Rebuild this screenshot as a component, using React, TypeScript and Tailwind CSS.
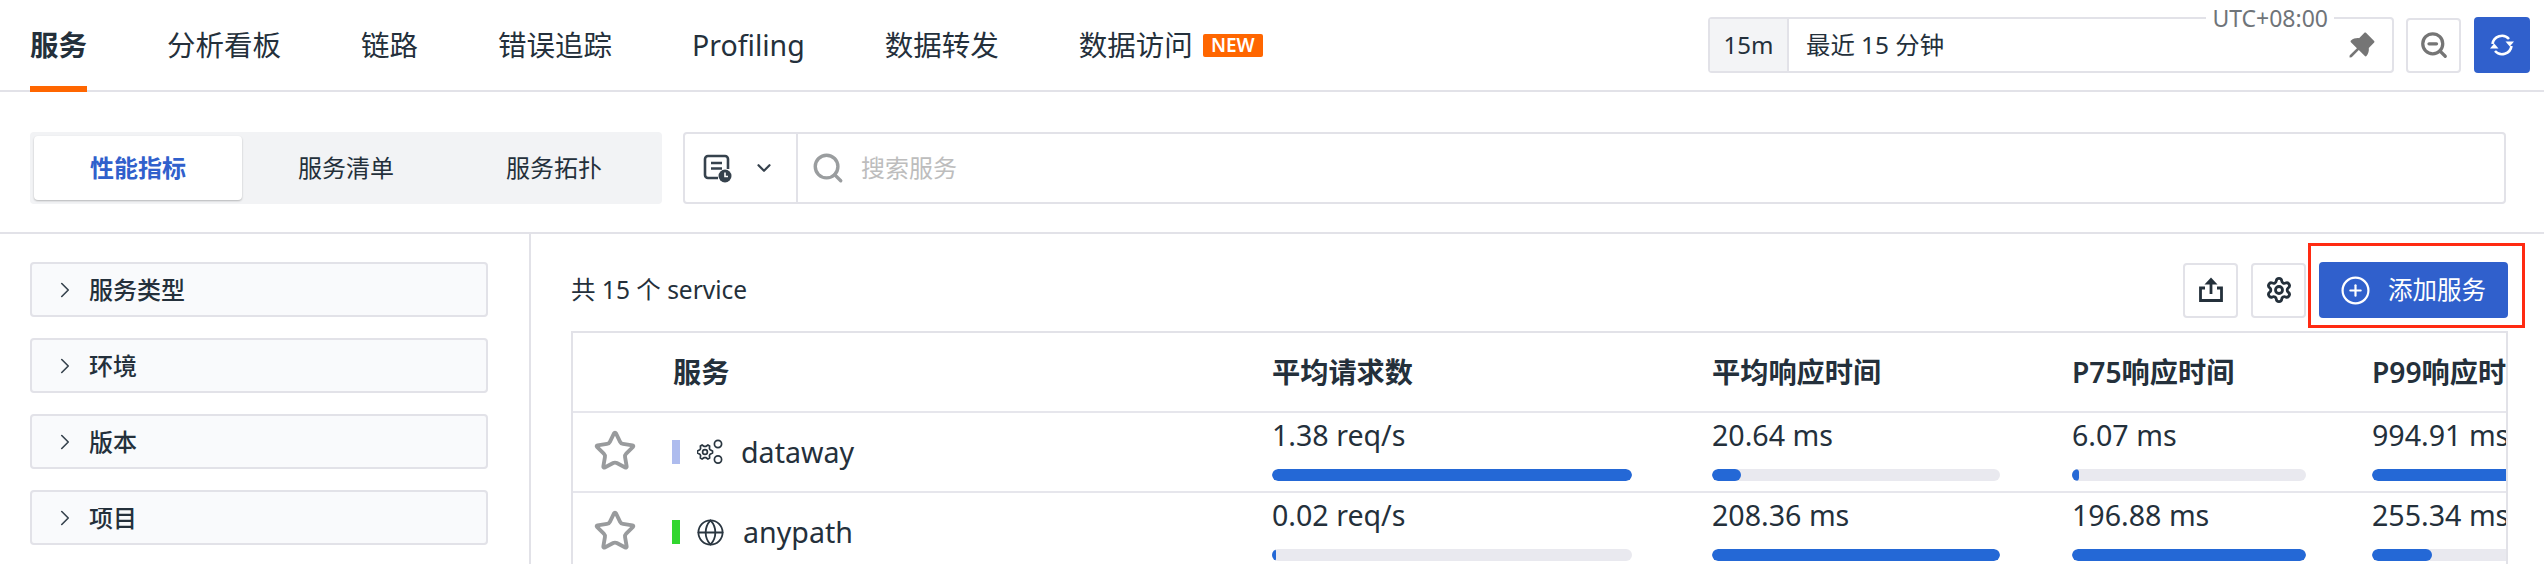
import React from 'react';
import { ChevronDown, ChevronRight, CirclePlus, Globe, Search, Settings, Star, ZoomOut } from 'lucide-react';
import { AiFillPushpin } from 'react-icons/ai';

const navItems = ['服务', '分析看板', '链路', '错误追踪', 'Profiling', '数据转发', '数据访问'];
const filters = ['服务类型', '环境', '版本', '项目'];

const rows = [
  {
    name: 'dataway',
    color: 'bg-[#aebcee]',
    textClass: 'ml-[18px]',
    metrics: [
      { value: '1.38 req/s', fill: 100 },
      { value: '20.64 ms', fill: 10 },
      { value: '6.07 ms', fill: 3 },
      { value: '994.91 ms', fill: 100 },
    ],
  },
  {
    name: 'anypath',
    color: 'bg-[#32d62f]',
    textClass: 'ml-[20px]',
    metrics: [
      { value: '0.02 req/s', fill: 1 },
      { value: '208.36 ms', fill: 100 },
      { value: '196.88 ms', fill: 100 },
      { value: '255.34 ms', fill: 23 },
    ],
  },
];

const gridCols = 'grid grid-cols-[100px_599px_440px_360px_300px_1fr]';

// six tooth gear outline for the service type icon
const gearPoints = Array.from({ length: 24 }, (_, i) => {
  const angle = ((i * 15 - 7.5) * Math.PI) / 180;
  const r = i % 4 < 2 ? 7.6 : 5.6;
  return `${(8 + r * Math.cos(angle)).toFixed(2)},${(13 + r * Math.sin(angle)).toFixed(2)}`;
}).join(' ');

function ServiceIcon() {
  return (
    <svg width="26" height="26" viewBox="0 0 26 26" fill="none" stroke="#2a3640" strokeWidth="1.7" strokeLinejoin="round">
      <polygon points={gearPoints} />
      <circle cx="8" cy="13" r="2.4" />
      <circle cx="21" cy="5" r="3.6" />
      <circle cx="21" cy="20.5" r="3.6" />
    </svg>
  );
}

function ListClockIcon() {
  return (
    <svg width="30" height="30" viewBox="0 0 30 30" fill="none">
      <path d="M16 25H6a3 3 0 0 1-3-3V6a3 3 0 0 1 3-3h17a3 3 0 0 1 3 3v10" stroke="#36424d" strokeWidth="2.6" />
      <path d="M9 10h11M9 15.5h11" stroke="#36424d" strokeWidth="2.6" />
      <circle cx="23" cy="23" r="6.5" fill="#36424d" />
      <path d="M23 19.5v4h3" stroke="#ffffff" strokeWidth="1.6" fill="none" />
    </svg>
  );
}

function UploadIcon() {
  return (
    <svg width="26" height="26" viewBox="0 0 26 26" fill="none">
      <path d="M7 11H2.5v12.5h21V11H19" stroke="#24303b" strokeWidth="2.8" />
      <path d="M13 17V5" stroke="#24303b" strokeWidth="2.8" />
      <path d="M13 0.5l6.5 7h-13z" fill="#24303b" />
    </svg>
  );
}

function RefreshIcon() {
  return (
    <svg width="26" height="26" viewBox="0 0 26 26" fill="none">
      <path d="M3.5 12a9.5 9.5 0 0 1 16.5-5" stroke="#ffffff" strokeWidth="2.6" />
      <path d="M22.5 14a9.5 9.5 0 0 1-16.5 5" stroke="#ffffff" strokeWidth="2.6" />
      <path d="M16.5 9.5h8.5l-4.2 5z" fill="#ffffff" />
      <path d="M9.5 16.5h-8.5l4.2-5z" fill="#ffffff" />
    </svg>
  );
}

function MetricCell({ value, fill, width }: { value: string; fill: number; width: string }) {
  return (
    <div className="flex flex-col pt-[3px] min-w-0">
      <span className="h-[38px] leading-[38px] whitespace-nowrap">{value}</span>
      <div className={`mt-[15px] h-[12px] rounded-full bg-[#e9e9ef] overflow-hidden ${width}`}>
        <div className="h-full rounded-full bg-[#2468d6]" style={{ width: `${fill}%` }} />
      </div>
    </div>
  );
}

const barWidths = ['w-[360px]', 'w-[288px]', 'w-[234px]', 'w-[260px]'];
const headers = ['平均请求数', '平均响应时间', 'P75响应时间', 'P99响应时间'];

export default function App() {
  return (
    <div className="w-[2544px] h-[564px] overflow-hidden bg-white text-[#24303b] text-[24px] font-['Noto_Sans','Noto_Sans_CJK_SC',sans-serif]">
      <header className="h-[92px] border-b-2 border-[#e2e2e8] flex items-center pl-[30px] pr-[14px]">
        <nav className="flex gap-[80px] text-[28.5px]">
          {navItems.map((item, i) => (
            <div key={item} className={`relative flex items-center whitespace-nowrap ${i === 0 ? 'font-semibold' : ''}`}>
              {item}
              {i === 0 && <div className="absolute left-0 right-0 top-[62px] h-[6px] bg-[#ff6600]" />}
              {item === '数据访问' && (
                <span className="ml-[10px] h-[23px] w-[60px] flex items-center justify-center rounded-[2px] bg-[#ff6600] text-white text-[19px] font-semibold">
                  NEW
                </span>
              )}
            </div>
          ))}
        </nav>
        <div className="ml-auto flex items-center">
          <div className="relative w-[686px] h-[56px] flex border-2 border-[#e2e2e8] rounded-[4px]">
            <div className="w-[79px] flex items-center justify-center bg-[#f3f4f6] border-r-2 border-[#e2e2e8]">15m</div>
            <div className="flex-1 flex items-center pl-[17px] text-[24.4px]">最近 15 分钟</div>
            <AiFillPushpin className="self-center mr-[13px] text-[#757575]" size={34} />
            <span className="absolute -top-[13px] right-[58px] px-[6px] bg-white text-[#6f7479] text-[23px] leading-[24px]">UTC+08:00</span>
          </div>
          <button className="ml-[12px] w-[55px] h-[55px] flex items-center justify-center border-2 border-[#e2e2e8] rounded-[4px]">
            <ZoomOut size={30} color="#757575" strokeWidth={2.6} />
          </button>
          <button className="ml-[13px] w-[56px] h-[56px] flex items-center justify-center bg-[#3060cc] rounded-[4px]">
            <RefreshIcon />
          </button>
        </div>
      </header>

      <section className="h-[142px] border-b-2 border-[#e2e2e8] pt-[40px] pl-[30px] pr-[38px] flex gap-[21px]">
        <div className="w-[632px] h-[72px] bg-[#f2f3f5] rounded-[4px] p-[4px] flex">
          <div className="w-[208px] flex items-center justify-center bg-white rounded-[4px] shadow-[0_1px_2px_rgba(0,0,0,0.25)] text-[#3060cc] font-semibold">性能指标</div>
          <div className="w-[208px] flex items-center justify-center">服务清单</div>
          <div className="w-[208px] flex items-center justify-center">服务拓扑</div>
        </div>
        <div className="flex-1 h-[72px] flex border-2 border-[#e2e2e8] rounded-[4px]">
          <div className="w-[113px] flex items-center pl-[17px] border-r-2 border-[#e2e2e8]">
            <ListClockIcon />
            <ChevronDown className="ml-[21px]" size={22} color="#36424d" strokeWidth={2.4} />
          </div>
          <div className="flex-1 flex items-center pl-[13px] text-[#bdbdbd]">
            <Search size={34} color="#9a9d9f" strokeWidth={2.4} />
            <span className="ml-[16px]">搜索服务</span>
          </div>
        </div>
      </section>

      <div className="flex h-[330px]">
        <aside className="w-[531px] border-r-2 border-[#e2e2e8] pt-[28px] pl-[30px] flex flex-col gap-[21px]">
          {filters.map((f) => (
            <div key={f} className="w-[458px] h-[55px] shrink-0 flex items-center pl-[20px] bg-[#f9fafc] border-2 border-[#e2e2e8] rounded-[4px] font-medium">
              <ChevronRight size={26} color="#36424d" strokeWidth={1.5} />
              <span className="ml-[11px]">{f}</span>
            </div>
          ))}
        </aside>

        <main className="flex-1 min-w-0 pt-[28px] pl-[40px] pr-[36px]">
          <div className="flex items-center h-[56px]">
            <span className="text-[24.5px]">共 15 个 service</span>
            <div className="ml-auto flex items-center">
              <button className="w-[55px] h-[55px] flex items-center justify-center border-2 border-[#e2e2e8] rounded-[4px]">
                <UploadIcon />
              </button>
              <button className="ml-[13px] w-[55px] h-[55px] flex items-center justify-center border-2 border-[#e2e2e8] rounded-[4px]">
                <Settings size={28} color="#24303b" strokeWidth={2.4} />
              </button>
              <div className="relative ml-[13px]">
                <button className="w-[189px] h-[56px] flex items-center pl-[21px] bg-[#3060cc] rounded-[4px] text-white text-[24.5px]">
                  <CirclePlus size={31} strokeWidth={1.7} />
                  <span className="ml-[17px]">添加服务</span>
                </button>
                <div className="absolute -top-[19px] -left-[11px] -right-[17px] -bottom-[10px] border-[3px] border-[#ff2a12] pointer-events-none" />
              </div>
            </div>
          </div>

          <div className="mt-[13px] border-t-2 border-x-2 border-[#e2e2e8] overflow-hidden text-[28.6px]">
            <div className={`${gridCols} h-[80px] items-center border-b-2 border-[#e6e6ec] text-[28.2px] font-semibold`}>
              <div />
              <div>服务</div>
              {headers.map((h) => (
                <div key={h} className="whitespace-nowrap">{h}</div>
              ))}
            </div>
            {rows.map((row) => (
              <div key={row.name} className={`${gridCols} h-[80px] border-b-2 border-[#e6e6ec]`}>
                <div className="flex items-center pl-[20px] pb-[2px]">
                  <Star size={44} color="#999b9d" strokeWidth={2.1} />
                </div>
                <div className="flex items-center">
                  <div className={`w-[8px] h-[24px] -ml-[1px] mr-[17px] ${row.color}`} />
                  <div className="w-[26px] flex justify-center">
                    {row.name === 'dataway' ? <ServiceIcon /> : <Globe className="shrink-0" size={29} color="#2a3640" strokeWidth={1.5} />}
                  </div>
                  <span className={row.textClass}>{row.name}</span>
                </div>
                {row.metrics.map((m, i) => (
                  <MetricCell key={i} value={m.value} fill={m.fill} width={barWidths[i]} />
                ))}
              </div>
            ))}
          </div>
        </main>
      </div>
    </div>
  );
}
